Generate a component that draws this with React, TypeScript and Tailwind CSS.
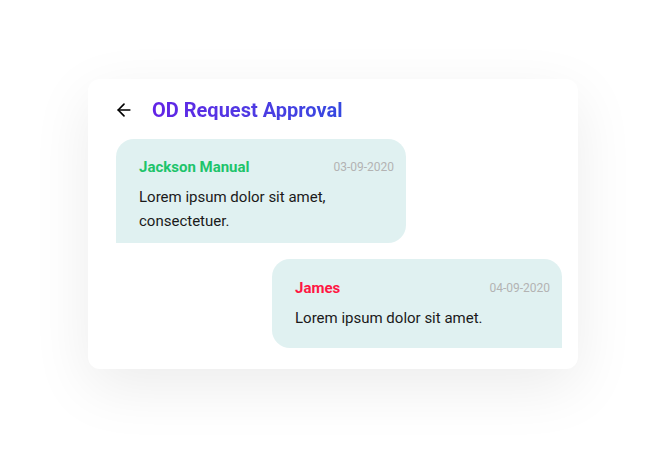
import { ArrowLeft } from 'lucide-react';

const messages = [
  {
    name: 'Jackson Manual',
    date: '03-09-2020',
    text: 'Lorem ipsum dolor sit amet, consectetuer.',
    mine: false,
  },
  {
    name: 'James',
    date: '04-09-2020',
    text: 'Lorem ipsum dolor sit amet.',
    mine: true,
  },
];

export default function App() {
  return (
    <div className="w-[670px] h-[470px] bg-white flex items-start pl-[88px] pt-[79px] font-['Roboto',sans-serif]">
      <div className="w-[490px] h-[290px] bg-white rounded-xl shadow-[0_18px_60px_rgba(0,0,0,0.08)] pl-[28px] pr-[16px] pt-[20px] flex flex-col">
        {/* Header */}
        <div className="flex items-center h-[22px] gap-[18px] -ml-[2px]">
          <ArrowLeft className="w-[20px] h-[20px] text-black" strokeWidth={2} />
          <h1 className="text-[20px] font-bold leading-none bg-gradient-to-r from-[#6222e6] to-[#3448e0] bg-clip-text text-transparent">
            OD Request Approval
          </h1>
        </div>

        {/* Messages */}
        <div className="mt-[18px] flex flex-col gap-[16px]">
          {messages.map((m, idx) => (
            <div
              key={idx}
              className={`w-[290px] bg-[#e0f1f1] pl-[23px] pr-[12px] ${
                m.mine
                  ? 'self-end rounded-t-[18px] rounded-bl-[18px] min-h-[89px] pt-[19px]'
                  : 'self-start rounded-t-[18px] rounded-br-[18px] pt-[18px] pb-[10px]'
              }`}
            >
              <div className="flex items-center justify-between h-[20px]">
                <span className={`text-[15px] font-bold ${m.mine ? 'text-[#ff1744]' : 'text-[#1ec46b]'}`}>
                  {m.name}
                </span>
                <span className="text-[12px] text-[#b3b3b3]">{m.date}</span>
              </div>
              <p className="mt-[8px] text-[15px] leading-[24px] text-[#1a1a1a] pr-[50px]">{m.text}</p>
            </div>
          ))}
        </div>
      </div>
    </div>
  );
}
